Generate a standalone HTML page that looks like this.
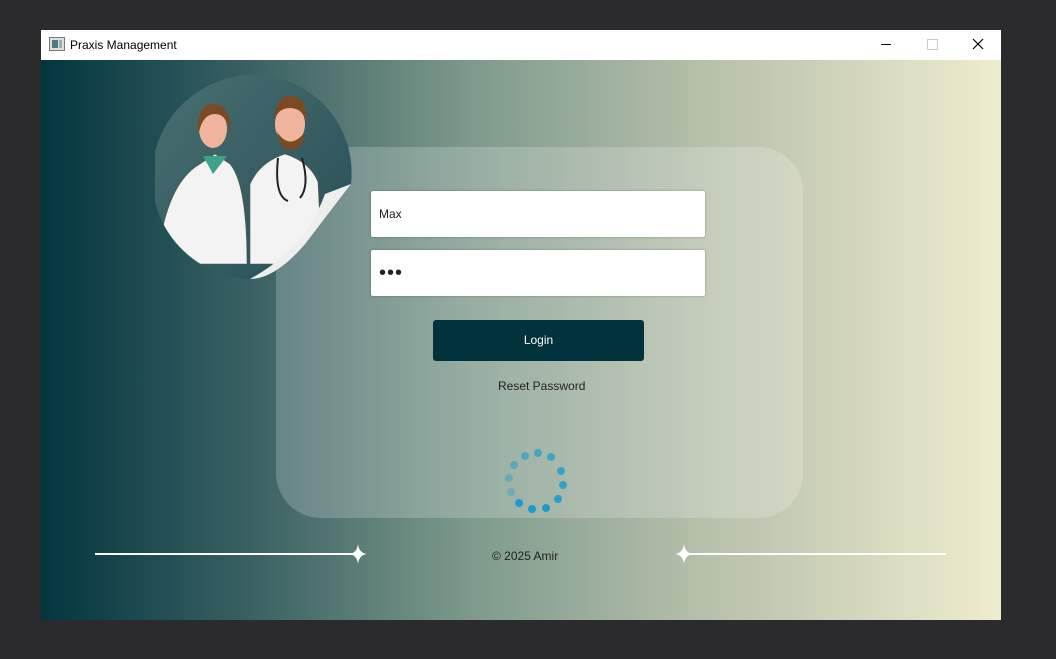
<!DOCTYPE html>
<html><head><style>
body{margin:0;width:1056px;height:659px;background:#2b2b2e;position:relative;overflow:hidden;font-family:"Liberation Sans",sans-serif}
.win{position:absolute;left:41px;top:30px;width:960px;height:590px;background:#fff}
.tb{position:absolute;left:0;top:0;width:960px;height:30px;background:#fff;font-size:12px;color:#000}
.content{position:absolute;left:0;top:30px;width:960px;height:560px;background:linear-gradient(90deg,#02363f 0%,#3a6163 22%,#7e9a8c 45%,#b4bea9 68%,#efecce 100%)}
.panel{position:absolute;left:235px;top:87px;width:527px;height:371px;border-radius:45px;background:rgba(255,255,255,0.2)}
.inp{position:absolute;left:330px;width:334px;height:46px;background:#fff;border-radius:2px;box-shadow:0 0 2px rgba(0,0,0,.3);font-size:12px;color:#222;box-sizing:border-box;padding-left:8px;line-height:46px}
.btn{position:absolute;left:392px;top:260px;width:211px;height:41px;background:#02323b;border-radius:3px;color:#fff;font-size:12px;text-align:center;line-height:41px}
</style></head><body>
<div class="win">
<div class="tb">
<svg style="position:absolute;left:8px;top:7px" width="16" height="14"><rect x="0.5" y="0.5" width="15" height="13" fill="#ddd" stroke="#777"/><rect x="3" y="3" width="6" height="8" fill="#4a7a7a"/><rect x="10" y="3" width="3" height="8" fill="#9ab"/></svg>
<span style="position:absolute;left:29px;top:8px">Praxis Management</span>
<div style="position:absolute;left:840px;top:14px;width:10px;height:1px;background:#000"></div>
<div style="position:absolute;left:886px;top:9px;width:9px;height:9px;border:1px solid #ccc"></div>
<svg style="position:absolute;left:931px;top:8px" width="12" height="12"><path d="M1 1L11 11M11 1L1 11" stroke="#000" stroke-width="1.2"/></svg>
</div>
<div class="content">
<div class="panel"></div>
<svg style="position:absolute;left:114px;top:14px" width="210" height="215">
<defs><clipPath id="c"><path d="M103 1 A98 98 0 0 1 196 110 L150 170 Q120 205 95 205 A102 102 0 0 1 103 1Z"/></clipPath>
<linearGradient id="g" x1="0" y1="0" x2="1" y2="1"><stop offset="0" stop-color="#4a6f72"/><stop offset="1" stop-color="#234c53"/></linearGradient></defs>
<g clip-path="url(#c)">
<rect width="210" height="215" fill="url(#g)"/>
<path d="M2 190 Q10 110 45 90 L60 80 L75 90 Q92 110 92 190Z" fill="#f3f3f3" stroke="#555" stroke-width=".6"/>
<path d="M48 82 L58 100 L72 82 Z" fill="#3fa08c"/>
<ellipse cx="58" cy="55" rx="14" ry="19" fill="#f0b39d"/>
<path d="M42 53 Q45 28 60 30 Q76 32 76 60 Q72 40 60 40 Q48 40 44 58Z" fill="#7a4a22"/>
<path d="M95 190 L95 110 Q105 88 130 80 Q155 88 163 108 L167 190Z" fill="#f3f3f3" stroke="#555" stroke-width=".6"/>
<ellipse cx="135" cy="50" rx="15" ry="20" fill="#f0b39d"/>
<path d="M119 47 Q121 20 137 22 Q153 24 151 47 Q147 34 135 34 Q123 34 119 47Z" fill="#7a4a22"/>
<path d="M122 58 Q135 77 150 58 L147 70 Q135 82 125 70Z" fill="#7a4a22"/>
<path d="M123 84 Q119 122 133 127 M147 84 Q155 112 145 124" stroke="#222" stroke-width="2" fill="none"/>
</g>
<path d="M196 110 L150 170 Q120 205 95 205 Q150 175 170 120Z" fill="#eee"/>
</svg>
<div class="inp" style="top:131px">Max</div>
<div class="inp" style="top:190px;font-size:20px;letter-spacing:1px">•••</div>
<div class="btn">Login</div>
<div style="position:absolute;left:457px;top:319px;font-size:12px;color:#222">Reset Password</div>
<svg style="position:absolute;left:462px;top:387px" width="70" height="70">
<g fill="#1d9bd0">
<circle cx="35" cy="6" r="4" opacity=".7"/><circle cx="48" cy="10" r="4" opacity=".75"/><circle cx="58" cy="24" r="4" opacity=".8"/><circle cx="60" cy="38" r="4" opacity=".85"/><circle cx="55" cy="52" r="4" opacity=".9"/><circle cx="43" cy="61" r="4"/><circle cx="29" cy="62" r="4"/><circle cx="16" cy="56" r="4"/><circle cx="8" cy="45" r="4" opacity=".35"/><circle cx="6" cy="31" r="4" opacity=".4"/><circle cx="11" cy="18" r="4" opacity=".5"/><circle cx="22" cy="9" r="4" opacity=".6"/>
</g></svg>
<div style="position:absolute;left:54px;top:493px;width:265px;height:2px;background:#fff"></div>
<div style="position:absolute;left:640px;top:493px;width:265px;height:2px;background:#fff"></div>
<svg style="position:absolute;left:308px;top:484px" width="18" height="20"><path d="M9 0Q10 9 18 10Q10 11 9 20Q8 11 0 10Q8 9 9 0Z" fill="#fff"/></svg>
<svg style="position:absolute;left:634px;top:484px" width="18" height="20"><path d="M9 0Q10 9 18 10Q10 11 9 20Q8 11 0 10Q8 9 9 0Z" fill="#fff"/></svg>
<div style="position:absolute;left:451px;top:489px;font-size:12px;color:#222">© 2025 Amir</div>
</div>
</div>
</body></html>
